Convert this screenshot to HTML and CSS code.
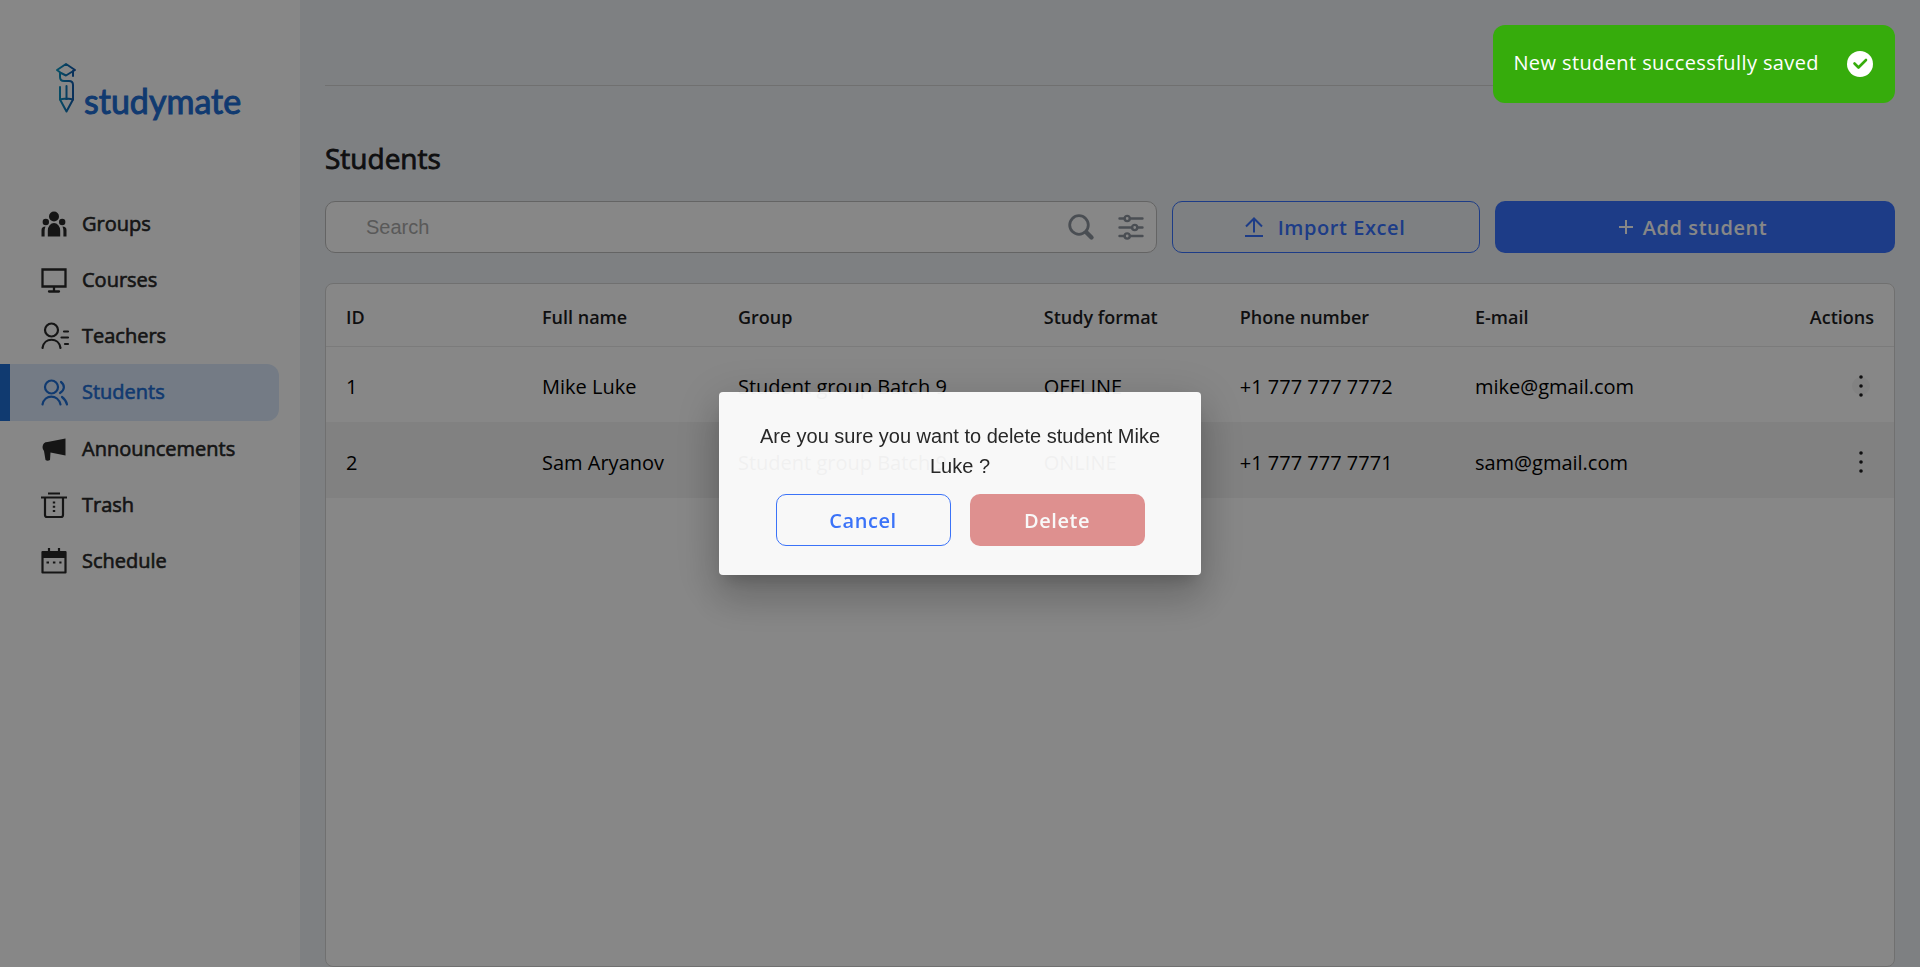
FILE: index.html
```
<!DOCTYPE html>
<html lang="en">
<head>
<meta charset="utf-8">
<meta name="viewport" content="width=device-width, initial-scale=1">
<title>Studymate – Students</title>
<link rel="stylesheet" href="styles.css">
</head>
<body>
<div class="app">
  <aside class="sidebar">
    <a class="logo" href="#" aria-label="studymate">
      <svg class="logo-mark" width="22" height="52" viewBox="0 0 22 52" fill="none" stroke="url(#brand)" stroke-width="2" stroke-linejoin="round" stroke-linecap="round" aria-hidden="true">
        <defs><linearGradient id="brand" gradientUnits="userSpaceOnUse" x1="1" y1="0" x2="21" y2="0"><stop offset="0" stop-color="#0c9cc4"/><stop offset="1" stop-color="#1352a8"/></linearGradient></defs>
        <path d="M11 2 2 8l4 3 5 2.500 4-2.500 5-3z"/>
        <path d="M18 9v5"/>
        <path d="M5 11v4q0 4 4 4h5q4 0 4 4v14.500l-6.500 12L5 37.500V25"/>
        <path d="M11.500 24v13M5 37.500q3.500-1 6.500-.500 3-.500 6.500.500"/>
      </svg>
      <span class="logo-text">studymate</span>
    </a>
    <nav class="nav">
      <a class="nav-item" href="#"><svg class="icon" viewBox="0 0 26 26" fill="currentColor"><circle cx="13" cy="5.500" r="5"/><circle cx="4.800" cy="11" r="3.200"/><circle cx="21.200" cy="11" r="3.200"/><path d="M6.800 25.500v-6a6.200 7.500 0 0 1 12.400 0v6zM.5 25.500V19q0-3.500 4-3.500-.9 2-.9 5v5zM25.500 25.500V19q0-3.500-4-3.500.9 2 .9 5v5z"/></svg><span class="nav-label">Groups</span></a>
      <a class="nav-item" href="#"><svg class="icon" viewBox="0 0 26 26" fill="none" stroke="currentColor" stroke-width="2.300"><path d="M1.500 2.500h23v17h-23zM13 20v4M8 24.500h10" stroke-linecap="round"/></svg><span class="nav-label">Courses</span></a>
      <a class="nav-item" href="#"><svg class="icon" viewBox="0 0 26 26" fill="none" stroke="currentColor" stroke-width="2.200" stroke-linecap="round"><circle cx="10.500" cy="7" r="6.500"/><path d="M1.500 25c1.500-11 16.500-11 18 0M23 8.500h4M20.500 14.500H27M24 21h3"/></svg><span class="nav-label">Teachers</span></a>
      <a class="nav-item nav-item-active" href="#" aria-current="page"><svg class="icon" viewBox="0 0 26 26" fill="none" stroke="currentColor" stroke-width="2.200" stroke-linecap="round"><circle cx="10.500" cy="7" r="6.500"/><path d="M1.500 24.500c2-10.500 15.500-10.500 18 0M20 2c4 3 4 8-1 11M21 17q4 3 5 7.500"/></svg><span class="nav-label">Students</span></a>
      <a class="nav-item" href="#"><svg class="icon" viewBox="0 0 26 26" fill="currentColor"><path d="M24.500 2.500v17L9.500 16.500 9 24q-2.500 1.500-4.500 0L3 15Q1.500 13.500 1.500 11 2 6 6.500 6z"/></svg><span class="nav-label">Announcements</span></a>
      <a class="nav-item" href="#"><svg class="icon" viewBox="0 0 26 26" fill="none" stroke="currentColor" stroke-width="2.200"><path d="M7 1.500h12M0 5.500h26M4 6v17q0 2 2 2h14q2 0 2-2V6"/><path d="M13 9.500v11" stroke-dasharray="2 2.300" stroke-width="2.400"/></svg><span class="nav-label">Trash</span></a>
      <a class="nav-item" href="#"><svg class="icon" viewBox="0 0 26 26" fill="none" stroke="currentColor" stroke-width="2.200"><path d="M1.500 4h23v20.500h-23z" stroke-linejoin="round"/><path d="M1 4h24v6H1z" fill="currentColor" stroke="none"/><path d="M8 0v4M18 0v4"/><path d="M5.500 14.500h15" stroke-dasharray="2.500 3.900"/></svg><span class="nav-label">Schedule</span></a>
    </nav>
  </aside>

  <main class="main">
    <header class="topbar"></header>
    <h1 class="title">Students</h1>
    <div class="toolbar">
      <form class="search">
        <input class="search-input" type="search" placeholder="Search" aria-label="Search">
        <button class="icon-button" type="button" aria-label="Search"><svg class="icon" viewBox="0 0 26 26" fill="none" stroke="currentColor" stroke-linecap="round"><circle cx="11" cy="11" r="9.300" stroke-width="2.800"/><path d="m18.500 18.500 5 5" stroke-width="4.400"/></svg></button>
        <button class="icon-button" type="button" aria-label="Filter"><svg class="icon" viewBox="0 0 26 26" fill="none" stroke="currentColor" stroke-width="2.400" stroke-linecap="round"><path d="M1.500 4.500h5M12 4.500h12.500M1.500 13.500H14M19.500 13.500h5M1.500 22h5M12 22h12.500"/><circle cx="9.200" cy="4.500" r="2.600"/><circle cx="16.700" cy="13.500" r="2.600"/><circle cx="9.200" cy="22" r="2.600"/></svg></button>
      </form>
      <button class="button button-outline button-import" type="button"><svg width="20" height="20" viewBox="0 0 20 20" fill="none" stroke="currentColor" stroke-width="2" aria-hidden="true"><path d="M10 15.500V2M2 9.500l8-8 8 8M1 19h18"/></svg>Import Excel</button>
      <button class="button button-primary button-add" type="button"><svg width="16" height="16" viewBox="0 0 16 16" fill="none" stroke="currentColor" stroke-width="2" aria-hidden="true"><path d="M8 1v14M1 8h14"/></svg>Add student</button>
    </div>
    <section class="card">
      <table class="table">
        <colgroup><col class="col"><col class="col"><col class="col-group"><col class="col"><col class="col-phone"><col class="col"><col></colgroup>
        <thead>
          <tr><th>ID</th><th>Full name</th><th>Group</th><th>Study format</th><th>Phone number</th><th>E-mail</th><th class="actions">Actions</th></tr>
        </thead>
        <tbody>
          <tr><td>1</td><td>Mike Luke</td><td>Student group Batch 9</td><td>OFFLINE</td><td>+1 777 777 7772</td><td>mike@gmail.com</td><td class="actions"><button class="more more-active" type="button" aria-label="Actions for Mike Luke"><svg width="4" height="22" viewBox="0 0 4 22" fill="currentColor"><circle cx="2" cy="2" r="1.800"/><circle cx="2" cy="11" r="1.800"/><circle cx="2" cy="20" r="1.800"/></svg></button></td></tr>
          <tr><td>2</td><td>Sam Aryanov</td><td>Student group Batch 9</td><td>ONLINE</td><td>+1 777 777 7771</td><td>sam@gmail.com</td><td class="actions"><button class="more" type="button" aria-label="Actions for Sam Aryanov"><svg width="4" height="22" viewBox="0 0 4 22" fill="currentColor"><circle cx="2" cy="2" r="1.800"/><circle cx="2" cy="11" r="1.800"/><circle cx="2" cy="20" r="1.800"/></svg></button></td></tr>
        </tbody>
      </table>
    </section>
  </main>
</div>

<div class="overlay">
  <div class="dialog" role="dialog" aria-modal="true" aria-labelledby="dialog-text">
    <p class="dialog-text" id="dialog-text">Are you sure you want to delete student Mike Luke ?</p>
    <div class="dialog-actions">
      <button class="button button-outline button-dialog" type="button">Cancel</button>
      <button class="button button-danger button-dialog" type="button">Delete</button>
    </div>
  </div>
</div>

<div class="toast" role="status">
  <span class="toast-text">New student successfully saved</span>
  <svg class="icon" viewBox="0 0 26 26" aria-hidden="true"><circle cx="13" cy="13" r="13" fill="#fff"/><path d="m7.500 12.500 4 4 7.500-7.500" fill="none" stroke="#36ac0c" stroke-width="2.600" stroke-linecap="round" stroke-linejoin="round"/></svg>
</div>
</body>
</html>
```
FILE: styles.css
```
* {
  box-sizing: border-box;
}

body {
  margin: 0;
  font-family: "Open Sans", "Noto Sans", sans-serif;
  font-size: 18px;
  color: #000;
  background: #eff2f5;
}

.app {
  display: flex;
  min-height: 100vh;
}

.icon {
  flex: none;
  width: 26px;
  height: 26px;
  overflow: visible;
}

/* Sidebar */
.sidebar {
  flex: none;
  width: 300px;
  background: #fff;
}

.logo {
  display: flex;
  align-items: flex-start;
  gap: 7px;
  height: 134px;
  margin: 62px 0 0 55px;
  color: #1f6ed4;
  text-decoration: none;
}

.logo-text {
  padding-top: 17px;
  font-family: Lato, sans-serif;
  font-size: 34px;
  line-height: 44px;
}

.logo-text,
.nav-label,
.title {
  -webkit-text-stroke: 0.03em currentColor;
}

.nav {
  display: flex;
  flex-direction: column;
}

.nav-item {
  display: flex;
  align-items: center;
  gap: 15px;
  height: 56px;
  margin-right: 21px;
  padding-left: 41px;
  font-size: 20px;
  color: #292929;
  text-decoration: none;
}

.nav-label {
  padding-bottom: 2px;
}

.nav-item-active {
  height: 57px;
  padding-left: 31px;
  border-left: 10px solid #1f6ed4;
  border-radius: 0 12px 12px 0;
  color: #1f6ed4;
  background: #dbe9fb;
}

/* Main */
.main {
  display: flex;
  flex: 1;
  flex-direction: column;
  min-width: 0;
  padding: 0 25px;
}

.topbar {
  height: 86px;
  border-bottom: 1px solid #d4d4d4;
}

.title {
  margin: 52px 0 23px;
  font-size: 28px;
  font-weight: 400;
  line-height: 40px;
  color: #1d1d1f;
}

.toolbar {
  display: flex;
  gap: 15px;
  height: 52px;
  margin-bottom: 30px;
}

.search {
  display: flex;
  flex: 1;
  align-items: center;
  gap: 24px;
  min-width: 0;
  padding: 0 12px 0 40px;
  border: 1px solid #bdbdbd;
  border-radius: 10px;
  background: #fff;
}

.search-input {
  flex: 1;
  min-width: 0;
  padding: 0;
  border: 0;
  font: 20px "Liberation Sans", Arial, sans-serif;
  background: none;
}

.search-input::placeholder {
  color: #a9a9a9;
}

.icon-button {
  display: flex;
  padding: 0;
  border: 0;
  color: #8d949e;
  background: none;
}

.button {
  display: flex;
  align-items: center;
  justify-content: center;
  gap: 14px;
  height: 52px;
  border: 1px solid transparent;
  border-radius: 10px;
  font-family: inherit;
  font-size: 20px;
  font-weight: 600;
  letter-spacing: 0.02857em;
}

.button-outline {
  color: #3772ff;
  border-color: #3772ff;
  background: none;
}

.button-primary {
  gap: 9px;
  color: #fff;
  background: #3772ff;
}

.button-danger {
  color: #fff;
  background: #e49190;
}

.button-import {
  width: 308px;
  padding: 0 8px 0 5px;
}

.button-add {
  width: 400px;
  padding: 0 10px 0 5px;
}

/* Table */
.card {
  flex: 1;
  overflow: hidden;
  border: 1px solid #d4d4d4;
  border-radius: 8px;
  background: #fff;
}

.table {
  width: 100%;
  table-layout: fixed;
  border-collapse: collapse;
  text-align: left;
}

.col {
  width: 12.5%;
}

.col-group {
  width: 19.5%;
}

.col-phone {
  width: 15%;
}

.table th,
.table td {
  padding: 0 20px;
  white-space: nowrap;
}

.table th {
  height: 62px;
  padding-top: 5px;
  border-bottom: 1px solid #e8e8e8;
  font-weight: 600;
  color: #1d1d1f;
}

.table td {
  height: 76px;
  padding-top: 5px;
  font-size: 20px;
}

.table tbody tr:nth-child(even) {
  background: #f3f3f3;
}

.table .actions {
  text-align: right;
}

.table td.actions {
  padding-top: 0;
}

.more {
  display: inline-flex;
  align-items: center;
  justify-content: center;
  width: 18px;
  height: 18px;
  margin-right: 4px;
  padding: 0;
  border: 0;
  border-radius: 50%;
  color: #1d1d1f;
  background: none;
  vertical-align: middle;
}

.more svg {
  flex: none;
}

.more-active {
  background: #f5f5f5;
}

/* Confirmation dialog */
.overlay {
  position: fixed;
  inset: 0;
  display: flex;
  align-items: center;
  justify-content: center;
  background: rgba(0, 0, 0, 0.47);
}

.dialog {
  width: 482px;
  padding: 29px 36px;
  border-radius: 4px;
  color: #222;
  background: #fff;
  opacity: 0.94;
  box-shadow: 0 11px 15px -7px rgba(0, 0, 0, 0.2), 0 24px 38px 3px rgba(0, 0, 0, 0.14), 0 9px 46px 8px rgba(0, 0, 0, 0.12);
}

.dialog-text {
  margin: 0 0 13px;
  font: 20px/30px "Liberation Sans", Arial, sans-serif;
  text-align: center;
}

.dialog-actions {
  display: flex;
  justify-content: center;
  gap: 19px;
}

.button-dialog {
  width: 175px;
}

/* Toast */
.toast {
  position: fixed;
  top: 25px;
  right: 25px;
  display: flex;
  align-items: center;
  gap: 28px;
  height: 78px;
  padding: 0 22px 0 20px;
  border-radius: 12px;
  font-size: 20px;
  letter-spacing: 0.02em;
  color: #fff;
  background: #36ac0c;
}

.toast-text {
  padding-bottom: 3px;
}
```
